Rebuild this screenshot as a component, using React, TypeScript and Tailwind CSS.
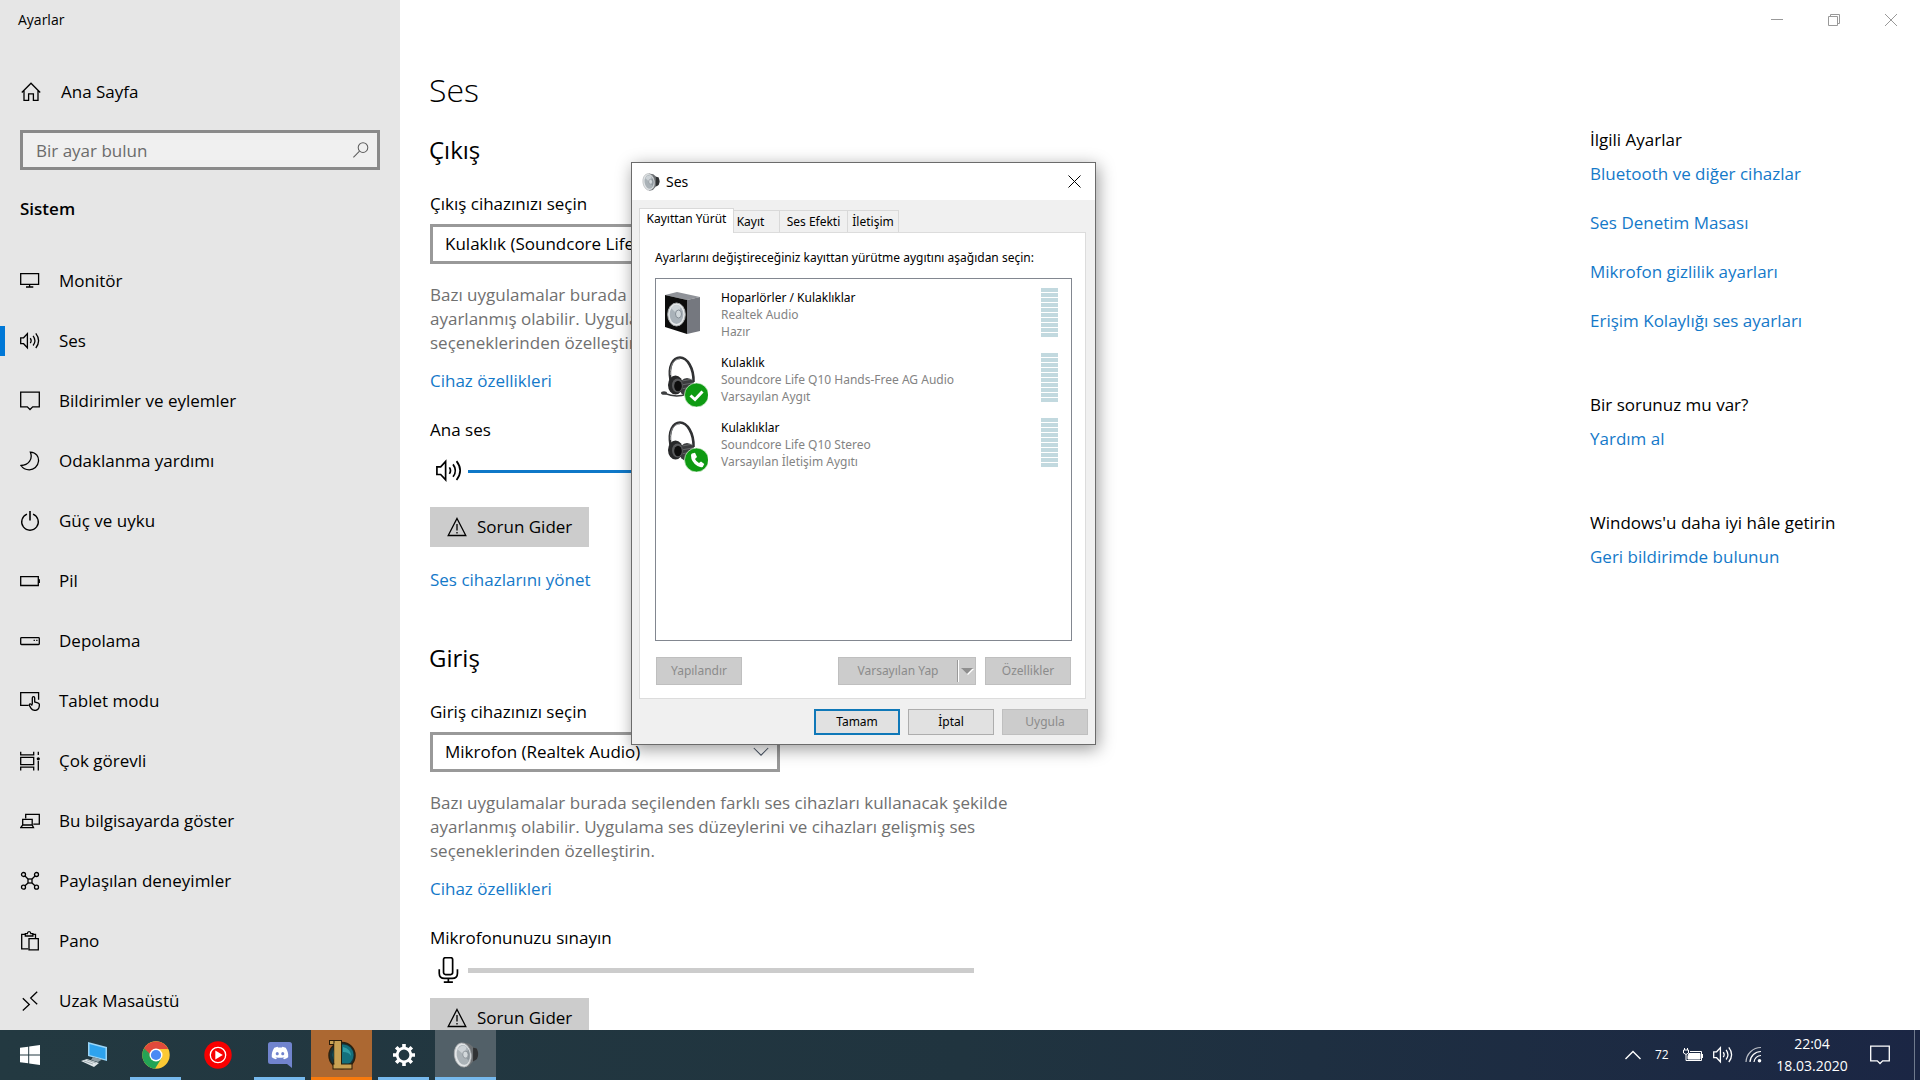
import type { ReactNode } from "react";
import { FaDiscord } from "react-icons/fa";

type IconProps = { children: ReactNode; className?: string };

const Icon = ({ children, className = "size-5" }: IconProps) => (
    <svg
        viewBox="0 0 20 20"
        fill="none"
        stroke="currentColor"
        strokeWidth={1.3}
        className={`shrink-0 ${className}`}
        aria-hidden="true"
    >
        {children}
    </svg>
);

const speakerPaths = (
    <>
        <path d="M.7 6.8h2.9L7.4 2.6v14.2L3.6 12.7H.7z" />
        <path d="M10.3 7.2q1.7 2.5 0 5" />
        <path d="M13.1 4.9q3.6 4.8 0 9.6" />
        <path d="M15.8 2.4q5.6 7.3 0 14.6" />
    </>
);

const noticePath = <path d="M.7 1.2h18.6v14.6h-6.6L10 18.5l-2.7-2.7H.7z" />;

const navItems = [
    {
        label: "Monitör",
        icon: <path d="M.7 2.7h17.9v10.6H.7zM9.6 13.3v2.6M6 16h7.3" />,
    },
    { label: "Ses", icon: speakerPaths, active: true },
    { label: "Bildirimler ve eylemler", icon: noticePath },
    {
        label: "Odaklanma yardımı",
        icon: <path d="M10.4 1.2c6 .2 8.5 4.8 8.1 9.1-.5 5.2-4.7 8.6-9.3 8.5-3.5 0-6.5-1.7-8.3-4.3 7.6-.3 12.2-6.5 9.5-13.3z" />,
    },
    {
        label: "Güç ve uyku",
        icon: (
            <>
                <path d="M7 3.2a8.3 8.3 0 1 0 6 0" />
                <path d="M10 0v9.6" strokeWidth={1.6} />
            </>
        ),
    },
    {
        label: "Pil",
        icon: (
            <>
                <path d="M.7 5.7h17.6v8.8H.7z" />
                <path d="M19.3 8.3v3.7" />
            </>
        ),
    },
    {
        label: "Depolama",
        icon: (
            <>
                <rect x=".7" y="6.7" width="18.6" height="6.8" rx=".8" />
                <path d="M13.6 9.4h1.3M16.2 9.4h1.3" />
            </>
        ),
    },
    {
        label: "Tablet modu",
        icon: (
            <>
                <path d="M8.7 14.3H.7V1.7h17.9v7" />
                <path d="M12.3 13.5V7q0-1.3 1.2-1.3T14.7 7v4l3 .8q1.8.5 1.7 2.2l-.3 2.2q-.8 3.2-3.9 3.2-3 0-4.3-2.3L9.3 14.3q0-1.8 1.5-1.2l1.5 1.3" />
            </>
        ),
    },
    {
        label: "Çok görevli",
        icon: (
            <>
                <path d="M.7.7v3.1h13V.7M.7 6.3h13v7.4H.7zM.7 19.5v-3.3h13v3.3M18.3.7v3.4M18.3 10v9.5" />
                <circle cx="18.3" cy="7.8" r="1.6" fill="currentColor" stroke="none" />
            </>
        ),
    },
    {
        label: "Bu bilgisayarda göster",
        icon: (
            <>
                <path d="M5.7 7.5V3.3h13.6v9.9h-6" />
                <path d="M2.7 14V8.3h9.5V14M.7 16.7l2-2.7h9.5l1.3 2.7z" />
            </>
        ),
    },
    {
        label: "Paylaşılan deneyimler",
        icon: (
            <>
                <circle cx="3.5" cy="3.5" r="2" />
                <circle cx="16.5" cy="3.5" r="2" />
                <circle cx="3.5" cy="16.2" r="2" />
                <circle cx="16.5" cy="16.2" r="2" />
                <rect x="8" y="8" width="4" height="4" />
                <path d="M5 5l3 3M15 5l-3 3M5 14.8L8 12M15 14.8L12 12" />
            </>
        ),
    },
    {
        label: "Pano",
        icon: (
            <>
                <path d="M8.3 17.8H1.7V3.3h3.8M12.5 3.3h3v4.2" />
                <path d="M5.3 5V2.7h2q.2-2 1.8-2t1.8 2h2V5z" />
                <path d="M9 7.7h9.3v11.1H9z" />
            </>
        ),
    },
    {
        label: "Uzak Masaüstü",
        icon: <path d="M2.8 7.3l6.5 6.2-6.5 6M17.2.8l-6.5 6.3 6.5 6.2" />,
    },
];

const linkClass = "text-[#1479c9] hover:text-gray-500";

const Sidebar = () => (
    <aside className="w-[400px] shrink-0 bg-[#e6e6e6]">
        <p className="flex h-10 items-center pl-[18px] text-sm">Ayarlar</p>
        <a href="#home" className="mt-[22px] flex h-[60px] items-center gap-5 pl-[21px]">
            <Icon>
                <path d="M.8 10.5L10 1.2l9.2 9.3M3 8.5v9.8h4.6v-6.5h4.8v6.5H17V8.5" />
            </Icon>
            Ana Sayfa
        </a>
        <div className="relative mx-5 mt-2">
            <input
                type="search"
                aria-label="Bir ayar bulun"
                placeholder="Bir ayar bulun"
                className="h-10 w-full appearance-none border-3 border-[#8a8a8a] bg-[#f0f0f0] px-[13px] outline-none placeholder:text-[#6b6b6b]"
            />
            <Icon className="absolute top-3 right-[11px] size-4 text-[#5d5d5d]">
                <circle cx="12.5" cy="7" r="6" />
                <path d="M8.2 11.5L.5 19.3" />
            </Icon>
        </div>
        <h2 className="mt-[19px] flex h-10 items-center pl-5 font-semibold">Sistem</h2>
        <nav className="mt-[22px]">
            {navItems.map((item) => (
                <a key={item.label} href="#item" className="relative flex h-[60px] items-center gap-[19px] pl-5">
                    {item.active && <span className="absolute left-0 h-[30px] w-[5px] bg-[#0078d7]" />}
                    <Icon>{item.icon}</Icon>
                    {item.label}
                </a>
            ))}
        </nav>
    </aside>
);

const DeviceSelect = ({ id, label, value }: { id: string; label: string; value: string }) => (
    <>
        <label htmlFor={id} className="mt-[14px] block leading-10">
            {label}
        </label>
        <div className="relative w-[350px]">
            <select id={id} className="h-10 w-full appearance-none border-3 border-[#999] bg-white px-3 outline-none">
                <option>{value}</option>
            </select>
            <Icon className="pointer-events-none absolute top-3 right-[11px] size-4 text-gray-600">
                <path d="M1 5l9 9 9-9" />
            </Icon>
        </div>
        <p className="mt-[19px] leading-6 text-[#707070]">
            Bazı uygulamalar burada seçilenden farklı ses cihazları kullanacak şekilde
            <br />
            ayarlanmış olabilir. Uygulama ses düzeylerini ve cihazları gelişmiş ses
            <br />
            seçeneklerinden özelleştirin.
        </p>
        <a href="#properties" className={`mt-[14px] block w-fit leading-6 ${linkClass}`}>
            Cihaz özellikleri
        </a>
    </>
);

const TroubleshootButton = () => (
    <button className="flex h-10 items-center gap-[10px] bg-[#ccc] px-[17px]">
        <Icon>
            <path d="M10 1.5l8.8 17H1.2zM10 7v6.5M10 15v1.6" />
        </Icon>
        Sorun Gider
    </button>
);

const Settings = () => (
    <section className="flex min-w-0 flex-1 flex-col items-start pl-[30px]">
        <h1 className="mt-[62px] -ml-px text-[32px] leading-14 font-light">Ses</h1>
        <h2 className="mt-3 -ml-px text-2xl leading-10">Çıkış</h2>
        <DeviceSelect id="output" label="Çıkış cihazınızı seçin" value="Kulaklık (Soundcore Life Q10)" />
        <label htmlFor="volume" className="mt-[25px] block leading-6">
            Ana ses
        </label>
        <div className="mt-[17px] flex h-6 items-center gap-[6px] pl-[6px]">
            <Icon className="size-[26px]">{speakerPaths}</Icon>
            <input
                id="volume"
                type="range"
                defaultValue={60}
                className="h-[3px] w-[506px] appearance-none bg-[#0f78c8]"
            />
        </div>
        <div className="mt-6">
            <TroubleshootButton />
        </div>
        <a href="#manage" className={`mt-[21px] block w-fit leading-6 ${linkClass}`}>
            Ses cihazlarını yönet
        </a>
        <h2 className="mt-[46px] -ml-px text-2xl leading-10">Giriş</h2>
        <DeviceSelect id="input" label="Giriş cihazınızı seçin" value="Mikrofon (Realtek Audio)" />
        <p className="mt-[25px] leading-6">Mikrofonunuzu sınayın</p>
        <div className="mt-2 flex h-6 items-center gap-[6px] pl-[6px]">
            <Icon className="size-[26px]">
                <rect x="5.8" y=".5" width="7" height="13" rx="1.5" />
                <path d="M2.500 9.500v3q0 4 4 4h6q4 0 4-4v-3M9.500 16.500v3M6 19.300h7" />
            </Icon>
            <div role="meter" aria-label="Mikrofonunuzu sınayın" aria-valuenow={0} className="h-[5px] w-[506px] bg-[#ccc]" />
        </div>
        <div className="mt-4">
            <TroubleshootButton />
        </div>
    </section>
);

const relatedLinks = ["Bluetooth ve diğer cihazlar", "Ses Denetim Masası", "Mikrofon gizlilik ayarları", "Erişim Kolaylığı ses ayarları"];

const Related = () => (
    <aside className="w-[330px] shrink-0">
        <div className="flex justify-end pr-px text-[#999]">
            <button aria-label="Simge durumuna küçült" className="flex h-10 w-[57px] items-center justify-center">
                <svg viewBox="0 0 12 12" className="size-3" stroke="currentColor">
                    <path d="M0 5.500h12" />
                </svg>
            </button>
            <button aria-label="Önceki boyut" className="flex h-10 w-[57px] items-center justify-center">
                <svg viewBox="0 0 12 12" className="size-3" fill="none" stroke="currentColor">
                    <path d="M.5 2.500h9v9h-9zM2.500 2.500v-2h9v9h-2" />
                </svg>
            </button>
            <button aria-label="Kapat" className="flex h-10 w-[57px] items-center justify-center">
                <svg viewBox="0 0 12 12" className="size-3" stroke="currentColor">
                    <path d="M0 0l12 12M12 0L0 12" />
                </svg>
            </button>
        </div>
        <h3 className="mt-[88px] leading-6">İlgili Ayarlar</h3>
        <ul className="mt-[10px] flex flex-col gap-[25px]">
            {relatedLinks.map((text) => (
                <li key={text} className="leading-6">
                    <a href="#related" className={linkClass}>
                        {text}
                    </a>
                </li>
            ))}
        </ul>
        <h3 className="mt-[60px] leading-6">Bir sorunuz mu var?</h3>
        <a href="#help" className={`mt-[10px] block leading-6 ${linkClass}`}>
            Yardım al
        </a>
        <h3 className="mt-[60px] leading-6">Windows'u daha iyi hâle getirin</h3>
        <a href="#feedback" className={`mt-[10px] block leading-6 ${linkClass}`}>
            Geri bildirimde bulunun
        </a>
    </aside>
);

const SpeakerCone = ({ className }: { className: string }) => (
    <svg viewBox="0 0 24 24" className={className} aria-hidden="true">
        <path d="M9 .5l6 1 4 3.500 3 1q2.500 5 0 10l-3.500 2-4 4.500-5 1z" fill="#6b6f72" />
        <path d="M18.500 5l3.500 1q2.500 5 0 10l-3.500 2z" fill="#303234" />
        <g transform="rotate(-8 9 12)">
            <ellipse cx="9" cy="12" rx="7.800" ry="11.200" fill="#e1e4e6" stroke="#a5a9ab" strokeWidth=".7" />
            <ellipse cx="9.600" cy="12" rx="6.200" ry="9.200" fill="#aab2b7" />
            <path d="M10 12L5 6q5-5 8.500-.5z" fill="#ccd2d6" />
            <path d="M10 12l5-4q1.500 5-1.500 10z" fill="#8e979d" />
            <ellipse cx="11.500" cy="12" rx="2.500" ry="3.300" fill="#d3d9dc" stroke="#858c92" strokeWidth=".7" />
        </g>
    </svg>
);

const SpeakerBox = () => (
    <svg viewBox="0 0 48 48" className="size-12" aria-hidden="true">
        <path d="M5 5l12-3 23 5-13 3z" fill="#8f9298" />
        <path d="M27 10l13-3v34l-13 3z" fill="#75787f" />
        <path d="M5 5l22 5v34L5 37z" fill="#0c0c0c" />
        <ellipse cx="16.500" cy="24.500" rx="8.800" ry="11.500" fill="#e6e9ea" stroke="#a4a8aa" />
        <ellipse cx="16.500" cy="24.500" rx="6.800" ry="9.500" fill="#a9b2b9" />
        <path d="M17 24l-6-6q5-6 10-1z" fill="#ccd3d7" />
        <ellipse cx="18.500" cy="24" rx="3" ry="4" fill="#cfd6da" stroke="#858e96" />
    </svg>
);

const Headset = ({ mic, badge }: { mic?: boolean; badge: ReactNode }) => (
    <svg viewBox="0 0 48 52" className="h-[52px] w-12" aria-hidden="true">
        <path d="M10.500 25C8 11 13 2.500 20 2.500S34 13 33.500 27" fill="none" stroke="#303133" strokeWidth="2.600" />
        <path d="M10.500 20C9.500 10 14 4 20 4" fill="none" stroke="#8c8e90" />
        {mic && <path d="M27 39Q16 43 5 38.500" fill="none" stroke="#37393b" strokeWidth="1.500" />}
        {mic && <ellipse cx="4" cy="38" rx="3" ry="1.800" fill="#3d3f41" />}
        <ellipse cx="27" cy="32" rx="8" ry="9" fill="#3a3b3d" />
        <path d="M22 26l11-2M21 30l12-2M21 34l11-2" stroke="#707274" strokeWidth=".8" />
        <ellipse cx="15.500" cy="30" rx="7.500" ry="9.500" fill="#272829" />
        <ellipse cx="17.500" cy="30.500" rx="5.500" ry="7" fill="#58595b" />
        <ellipse cx="18" cy="31" rx="3.800" ry="5.200" fill="#0d0d0d" />
        <circle cx="36.500" cy="40" r="12" fill="#0e9a12" stroke="#e3f2df" strokeWidth=".7" />
        {badge}
    </svg>
);

const checkBadge = <path d="M30.500 40.500l4.500 4 7.500-8" fill="none" stroke="#fff" strokeWidth="3" />;
const phoneBadge = (
    <path
        d="M32 33.500l3-.7 2 4.200-2 2q1.200 2.700 4 4l2-1.500 3.300 2.600-1.600 2.800q-2.200 1-5.200-.8-6.500-4.200-6.500-10.600 0-1.500 1-2z"
        fill="#fff"
    />
);

const devices = [
    { name: "Hoparlörler / Kulaklıklar", driver: "Realtek Audio", status: "Hazır", icon: <SpeakerBox /> },
    {
        name: "Kulaklık",
        driver: "Soundcore Life Q10 Hands-Free AG Audio",
        status: "Varsayılan Aygıt",
        icon: <Headset mic badge={checkBadge} />,
    },
    {
        name: "Kulaklıklar",
        driver: "Soundcore Life Q10 Stereo",
        status: "Varsayılan İletişim Aygıtı",
        icon: <Headset badge={phoneBadge} />,
    },
];

const disabledButton = "border border-[#bfbfbf] bg-[#ccc] text-[#8b8b8b]";

const SoundDialog = () => (
    <div
        role="dialog"
        aria-labelledby="dialog-title"
        className="absolute top-[162px] left-[631px] w-[465px] border border-[#6b6b6b] bg-[#f0f0f0] font-['Noto_Sans','Open_Sans',sans-serif] text-xs shadow-[2px_4px_16px_rgba(0,0,0,0.4)]"
    >
        <div className="flex h-[37px] items-center bg-white pl-[10px]">
            <SpeakerCone className="h-[18px] w-[18px]" />
            <h2 id="dialog-title" className="ml-[6px] flex-1 text-sm">
                Ses
            </h2>
            <button aria-label="Kapat" className="flex h-full w-[42px] items-center justify-center">
                <svg viewBox="0 0 13 13" className="size-[13px]" stroke="#000">
                    <path d="M.5.500l12 12M12.500.500l-12 12" />
                </svg>
            </button>
        </div>
        <div className="px-[7px] pt-2">
            <div role="tablist" className="flex items-end">
                <button role="tab" aria-selected="true" className="relative z-10 -mb-px h-[25px] w-[95px] border border-b-0 border-[#d9d9d9] bg-white pb-1">
                    Kayıttan Yürüt
                </button>
                <button role="tab" aria-selected="false" className="h-[22px] w-[46px] border border-b-0 border-l-0 border-[#d9d9d9] pr-3">
                    Kayıt
                </button>
                <button role="tab" aria-selected="false" className="h-[22px] w-[68px] border border-b-0 border-l-0 border-[#d9d9d9]">
                    Ses Efekti
                </button>
                <button role="tab" aria-selected="false" className="h-[22px] w-[51px] border border-b-0 border-l-0 border-[#d9d9d9]">
                    İletişim
                </button>
            </div>
            <div role="tabpanel" className="mr-[2px] border border-[#dcdcdc] bg-white pr-[13px] pb-[13px] pl-[15px]">
                <p className="pt-[15px] leading-5">
                    Ayarlarını değiştireceğiniz kayıttan yürütme aygıtını aşağıdan seçin:
                </p>
                <ul className="mt-[10px] h-[363px] border border-[#828790] pt-2">
                    {devices.map((device) => (
                        <li key={device.name} className="flex h-[65px]">
                            <div className="w-[52px] shrink-0 pt-[3px] pl-1">{device.icon}</div>
                            <div className="flex-1 pt-[2px] pl-[13px] leading-[17px] text-[#838383]">
                                <p className="text-black">{device.name}</p>
                                <p>{device.driver}</p>
                                <p>{device.status}</p>
                            </div>
                            <div className="mr-[13px] flex w-[17px] flex-col gap-px pt-px">
                                {Array.from({ length: 10 }, (_, i) => (
                                    <span key={i} className="h-1 bg-[#c2d9df]" />
                                ))}
                            </div>
                        </li>
                    ))}
                </ul>
                <div className="mt-4 flex px-px">
                    <button disabled className={`h-7 w-[86px] ${disabledButton}`}>
                        Yapılandır
                    </button>
                    <button disabled className={`ml-auto flex h-7 w-[138px] items-center ${disabledButton}`}>
                        <span className="flex-1">Varsayılan Yap</span>
                        <span className="h-[22px] w-[2px] border-l border-[#999] bg-white" />
                        <svg viewBox="0 0 16 16" className="size-4" aria-hidden="true">
                            <path d="M3 6h12l-6 6z" fill="#fff" />
                            <path d="M2 5h12l-6 6z" fill="#8f8f8f" />
                        </svg>
                    </button>
                    <button disabled className={`ml-[9px] h-7 w-[86px] ${disabledButton}`}>
                        Özellikler
                    </button>
                </div>
            </div>
        </div>
        <div className="flex justify-end gap-2 pt-[10px] pr-[7px] pb-[9px]">
            <button className="h-[26px] w-[86px] border-2 border-[#0f78b8] bg-[#e1e1e1]">Tamam</button>
            <button className="h-[26px] w-[86px] border border-[#adadad] bg-[#e1e1e1]">İptal</button>
            <button disabled className={`h-[26px] w-[86px] ${disabledButton}`}>
                Uygula
            </button>
        </div>
    </div>
);

const Computer = () => (
    <svg viewBox="0 0 28 28" className="size-7">
        <path d="M8 1l19 5v14L8 15z" fill="#9ad5f7" />
        <path d="M9.500 3l16 4.200v11L9.500 14z" fill="#2ea3ee" />
        <path d="M13 16l9 2.500-4 2.500-7-2z" fill="#8d9da5" />
        <path d="M1 20l6-2 12 4-5 4z" fill="#dfe5e8" />
        <path d="M4 20l9 3M7 19l9 3" stroke="#8c999f" strokeWidth=".7" />
    </svg>
);

const Chrome = () => (
    <svg viewBox="0 0 28 28" className="size-7">
        <circle cx="14" cy="14" r="13.700" fill="#fbc934" />
        <path d="M2.100 7.200A13.700 13.700 0 0 0 13 27.700l6.500-10.500L14 14z" fill="#23a455" />
        <path d="M2.100 7.200A13.700 13.700 0 0 1 26.200 8H14a6.300 6.300 0 0 0-6 4.800L8 17z" fill="#e04a3b" />
        <path d="M2.100 7.200l6 10.200L13 14 8 13z" fill="#23a455" />
        <circle cx="14" cy="14" r="6.500" fill="#fff" />
        <circle cx="14" cy="14" r="5.100" fill="#4a8af4" />
    </svg>
);

const Music = () => (
    <svg viewBox="0 0 28 28" className="size-7">
        <circle cx="14" cy="14" r="13.700" fill="#f80000" />
        <circle cx="14" cy="14" r="7.700" fill="none" stroke="#fff" strokeWidth="1.300" />
        <path d="M11.300 9.500l7.500 4.500-7.500 4.500z" fill="#fff" />
    </svg>
);

const Discord = () => (
    <span className="relative flex h-[26px] w-6 flex-col">
        <svg viewBox="0 0 24 26" className="absolute inset-0">
            <path d="M2.500 0h19Q24 0 24 2.500V26l-5-4H2.500Q0 22 0 19.500v-17Q0 0 2.500 0z" fill="#7184ce" />
        </svg>
        <FaDiscord className="relative mx-auto mt-[2px] size-[18px] text-white" />
    </span>
);

const League = () => (
    <svg viewBox="0 0 30 32" className="h-8 w-[30px]">
        <circle cx="15" cy="16.500" r="13" fill="#16343c" stroke="#2b210f" strokeWidth="1.500" />
        <circle cx="16" cy="16" r="10.500" fill="#14707c" />
        <path d="M16 8q8 2 8 9-2-4-8-4z" fill="#2f9da4" />
        <g fill="#c9a253" stroke="#2a1d0a">
            <rect x="2.500" y="1.500" width="12" height="4" />
            <rect x="7" y="1.500" width="7.500" height="28" />
            <rect x="6" y="25" width="19" height="5" />
        </g>
        <rect x="7.500" y="4" width="6.500" height="23" fill="#c9a253" />
    </svg>
);

const Gear = () => (
    <svg viewBox="0 0 24 24" className="size-6" fill="none" stroke="#fff">
        <circle cx="12" cy="12" r="6.800" strokeWidth="2.800" />
        <path
            d="M12 1v4M12 19v4M1 12h4M19 12h4M4.200 4.200L7 7M17 17l2.800 2.800M19.800 4.200L17 7M7 17l-2.800 2.800"
            strokeWidth="3.600"
        />
    </svg>
);

const apps = [
    { label: "Bu bilgisayar", icon: <Computer />, className: "", line: "" },
    { label: "Chrome", icon: <Chrome />, className: "", line: "w-[51px] bg-[#76b9ed]" },
    { label: "Müzik", icon: <Music />, className: "", line: "" },
    { label: "Discord", icon: <Discord />, className: "", line: "w-[51px] bg-[#76b9ed]" },
    { label: "League", icon: <League />, className: "bg-[#ac6832]", line: "w-full bg-[#f87a0d]" },
    { label: "Ayarlar", icon: <Gear />, className: "", line: "w-[51px] bg-[#76b9ed]" },
    { label: "Ses", icon: <SpeakerCone className="size-[26px]" />, className: "bg-[#526068]", line: "w-full bg-[#76b9ed]" },
];

const Taskbar = () => (
    <footer className="relative z-20 flex h-[50px] shrink-0 bg-linear-to-r from-[#233941] via-[#20343f] to-[#1b2644] text-white">
        <button aria-label="Başlat" className="mr-[3px] flex w-[60px] items-center justify-center">
            <svg viewBox="0 0 20 20" className="size-5" fill="#fff">
                <path d="M0 2.800L8.200 1.700v7.800H0zM9.200 1.500L20 0v9.500H9.200zM0 10.500h8.200v7.800L0 17.200zM9.200 10.500H20V20L9.200 18.500z" />
            </svg>
        </button>
        <div className="flex gap-px">
            {apps.map((app) => (
                <button
                    key={app.label}
                    aria-label={app.label}
                    className={`relative flex w-[61px] items-center justify-center ${app.className}`}
                >
                    {app.icon}
                    {app.line && <span className={`absolute bottom-0 h-[3px] ${app.line}`} />}
                </button>
            ))}
        </div>
        <div className="ml-auto flex items-center">
            <button aria-label="Gizli simgeleri göster">
                <svg viewBox="0 0 16 10" className="h-[10px] w-4" fill="none" stroke="#fff" strokeWidth="1.400">
                    <path d="M.5 9L8 1.500 15.500 9" />
                </svg>
            </button>
            <span className="ml-[14px] w-4 text-xs">72</span>
            <svg viewBox="0 0 20 16" className="ml-3 h-4 w-5" fill="none" stroke="#fff" aria-hidden="true">
                <path d="M1.500 1v2M4.500 1v2M.5 3h5v3L3 7.500.5 6zM3 7.500v6h15.500v-9H7M19.500 7v4" />
                <path d="M6 6.500h11v5.500H5V9z" fill="#fff" />
            </svg>
            <Icon className="ml-[10px] size-5">{speakerPaths}</Icon>
            <svg viewBox="0 0 18 18" className="ml-3 size-[18px]" fill="none" stroke="#fff" strokeWidth="1.200" aria-hidden="true">
                <path d="M1 16A15 15 0 0 1 16 1.500" opacity=".7" />
                <path d="M5 16A11 11 0 0 1 16 5.500M9 16a7 7 0 0 1 7-6.500" />
                <circle cx="14.500" cy="14.800" r="1.800" fill="#fff" stroke="none" />
            </svg>
            <p className="ml-[13px] w-[72px] text-center text-sm leading-[22px]">
                22:04
                <br />
                18.03.2020
            </p>
            <button aria-label="Bildirimler" className="ml-[22px]">
                <Icon>{noticePath}</Icon>
            </button>
            <span className="mr-[5px] ml-6 h-[50px] w-px bg-[#6f7a8d]" />
        </div>
    </footer>
);

const App = () => {
    return (
        <div className="relative flex h-screen flex-col overflow-hidden bg-white font-['Open_Sans','Noto_Sans',sans-serif] text-[17px] text-black">
            <main className="flex min-h-0 flex-1 overflow-hidden">
                <Sidebar />
                <Settings />
                <Related />
            </main>
            <Taskbar />
            <SoundDialog />
        </div>
    );
};

export default App;
